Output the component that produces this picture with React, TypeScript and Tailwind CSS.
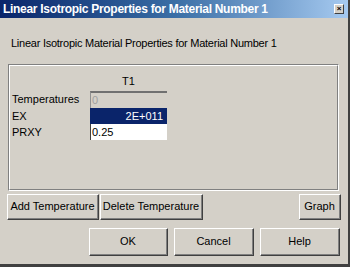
const font = { fontFamily: '"Liberation Sans", Arial, sans-serif' }

function Btn({ label, className }: { label: string; className: string }) {
  return (
    <div className={`border border-t-white border-l-white border-r-[#404040] border-b-[#404040] ${className}`}>
      <div className="w-full h-full flex items-center justify-center border-r border-b border-[#808080] text-[11px] text-black whitespace-nowrap">
        {label}
      </div>
    </div>
  )
}

export default function App() {
  return (
    <div className="w-[350px] h-[267px] bg-[#d4d0c8] overflow-hidden" style={font}>
      <div className="w-[350px] h-[267px] border-r-2 border-b-[3px] border-r-[#404040] border-b-[#404040] flex flex-col">
        {/* Title bar */}
        <div className="h-[18px] flex items-center justify-between pl-[3px] pr-[4px] bg-gradient-to-r from-[#0a246a] via-[#3a6ea5] to-[#a6caf0]">
          <span className="text-white font-bold text-[12px] tracking-[-0.3px] leading-none whitespace-nowrap">
            Linear Isotropic Properties for Material Number 1
          </span>
          <div className="w-[10px] h-[10px] bg-[#d4d0c8] border border-t-white border-l-white border-r-[#404040] border-b-[#404040] flex items-center justify-center text-[8px] leading-none text-black font-bold">
            ×
          </div>
        </div>

        {/* Subtitle */}
        <div className="pl-[11px] pt-[19px] text-[11px] tracking-[-0.25px] text-black leading-[13px] whitespace-nowrap">
          Linear Isotropic Material Properties for Material Number 1
        </div>

        {/* Group box */}
        <div className="mt-[14px] ml-[8px] mr-[9px] h-[127px] border border-t-[#808080] border-l-[#808080] border-r-white border-b-white">
          <div className="h-full border border-t-white border-l-white border-r-[#808080] border-b-[#808080] pt-[6px]">
            <div className="grid grid-cols-[80px_77px] text-[11px] text-black">
              <div />
              <div className="h-[19px] flex items-center justify-center">T1</div>

              <div className="h-[17px] flex items-center pl-[2px]">Temperatures</div>
              <div className="h-[17px] border-t-2 border-t-[#707070] border-l border-l-[#909090] bg-[#d4d0c8] text-[#a0a0a0] flex items-center pl-[1px]">
                0
              </div>

              <div className="h-[16px] flex items-center pl-[2px]">EX</div>
              <div className="h-[16px] bg-[#0a246a] text-white flex items-center justify-end pr-[4px]">2E+011</div>

              <div className="h-[16px] flex items-center pl-[2px]">PRXY</div>
              <div className="h-[16px] bg-white border-l border-l-[#404040] flex items-center pl-[1px]">0.25</div>
            </div>
          </div>
        </div>

        {/* Table buttons */}
        <div className="flex mt-[3px] ml-[7px] mr-[7px] h-[26px]">
          <Btn label="Add Temperature" className="w-[92px] h-full" />
          <Btn label="Delete Temperature" className="w-[103px] h-full ml-[1px]" />
          <div className="flex-1" />
          <Btn label="Graph" className="w-[42px] h-full" />
        </div>

        {/* Dialog buttons */}
        <div className="flex justify-end gap-[6px] mt-[8px] mr-[8px] h-[28px]">
          <Btn label="OK" className="w-[79px] h-full" />
          <Btn label="Cancel" className="w-[80px] h-full" />
          <Btn label="Help" className="w-[80px] h-full" />
        </div>
      </div>
    </div>
  )
}
